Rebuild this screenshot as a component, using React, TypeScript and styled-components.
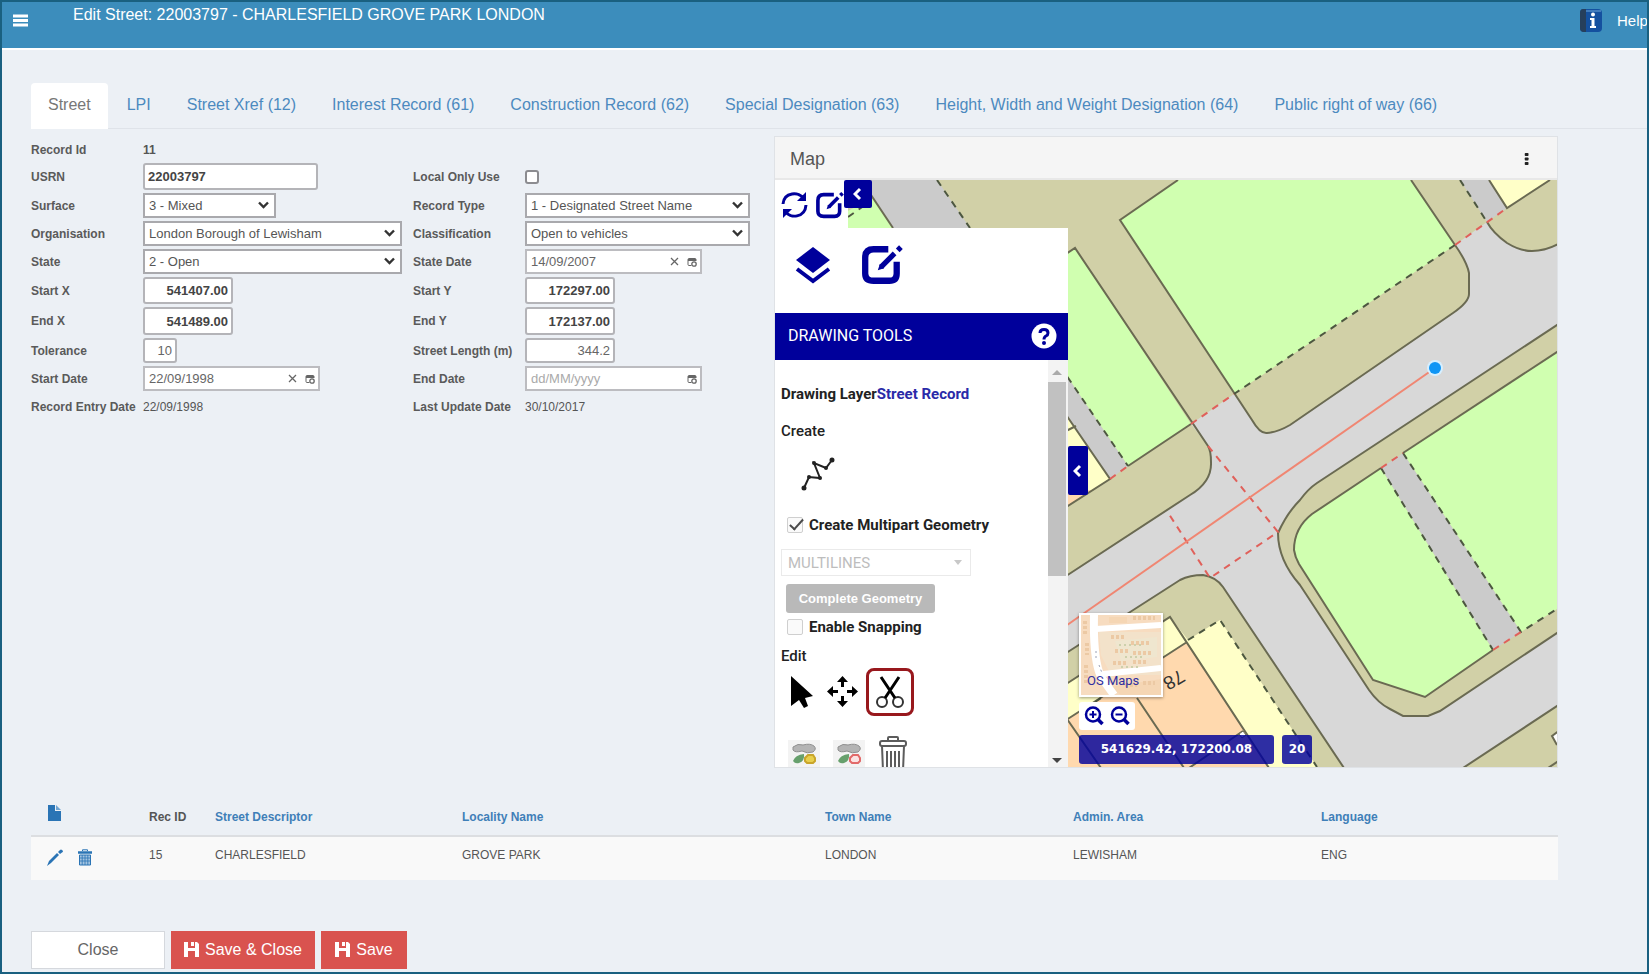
import React from "react";
import styled, { createGlobalStyle } from "styled-components";

const NAVY = "#00009b";
const LINK = "#4c8abf";

const GlobalStyle = createGlobalStyle`
  * { box-sizing: border-box; }
  body {
    margin: 0;
    background: #ecf0f5;
    font-family: "Liberation Sans", Arial, sans-serif;
    color: #555;
  }
  button, input, select { font-family: inherit; margin: 0; }
  button { cursor: pointer; }
  svg { display: block; }
`;

const Page = styled.div`
  min-height: 100vh;
  border: 2px solid #1a6080;
  display: flex;
  flex-direction: column;
`;

const Header = styled.header`
  display: flex;
  align-items: flex-start;
  height: 48px;
  background: #3c8dbc;
  border-bottom: 2px solid #fff;
  color: #fff;
  overflow: hidden;
`;

const MenuButton = styled.button`
  border: 0;
  background: none;
  padding: 12px 11px;
  width: 71px;
  color: #fff;
`;

const Title = styled.h1`
  margin: 0;
  flex: 1;
  font-size: 16px;
  line-height: 26px;
  font-weight: 400;
`;

const HelpLink = styled.a`
  display: flex;
  align-items: center;
  gap: 14px;
  width: 68px;
  padding-top: 6px;
  color: #fff;
  font-size: 15px;
  line-height: 24px;
  text-decoration: none;
  white-space: nowrap;
  svg { flex: none; }
`;

const Tabs = styled.nav`
  display: flex;
  margin: 33px 0 0 29px;
  border-bottom: 1px solid #dfe3e9;
`;

const Tab = styled.a<{ $active?: boolean }>`
  padding: 0 17px 2px;
  margin: 0 2px -1px 0;
  border-radius: 4px 4px 0 0;
  font-size: 16px;
  line-height: 44px;
  text-decoration: none;
  white-space: nowrap;
  color: ${(p) => (p.$active ? "#777" : LINK)};
  background: ${(p) => (p.$active ? "#fff" : "transparent")};
`;

const Main = styled.main`
  padding: 0 89px 3px 29px;
`;

const Columns = styled.div`
  display: flex;
  align-items: flex-start;
  padding-top: 7px;
`;

const Form = styled.form`
  flex: none;
  width: 743px;
  padding-top: 3px;
  display: grid;
  grid-template-columns: 112px 270px 112px 1fr;
  grid-template-rows: 21px 27px repeat(3, 25px) 27px 28px repeat(3, 25px);
  row-gap: 3px;
  align-items: center;
`;

const Label = styled.label`
  font-size: 12px;
  line-height: 16px;
  font-weight: 700;
  color: #5a5a5a;
  white-space: nowrap;
`;

const Value = styled.span<{ $strong?: boolean }>`
  font-size: 12px;
  line-height: 16px;
  font-weight: ${(p) => (p.$strong ? 700 : 400)};
`;

const TextBox = styled.input<{ $w: number; $strong?: boolean; $right?: boolean }>`
  width: ${(p) => p.$w}px;
  height: 100%;
  padding: 0 3px;
  border: 2px solid #b4b4b8;
  border-radius: 3px;
  background: #fff;
  color: ${(p) => (p.$strong ? "#444" : "#666")};
  font-size: 13px;
  font-weight: ${(p) => (p.$strong ? 700 : 400)};
  text-align: ${(p) => (p.$right ? "right" : "left")};
`;

const SelectWrap = styled.div<{ $w: number }>`
  position: relative;
  width: ${(p) => p.$w}px;
  height: 100%;
  svg { position: absolute; right: 7px; top: 8px; pointer-events: none; }
`;

const Select = styled.select`
  appearance: none;
  width: 100%;
  height: 100%;
  padding: 0 24px 0 4px;
  border: 2px solid #a9a9ad;
  border-radius: 0;
  background: #fff;
  color: #555;
  font-size: 13px;
`;

const DateWrap = styled.div`
  display: flex;
  align-items: center;
  gap: 8px;
  width: 177px;
  height: 100%;
  padding: 0 3px 0 4px;
  border: 2px solid #bcbcc0;
  background: #fff;
`;

const DateInput = styled.input`
  flex: 1;
  min-width: 0;
  padding: 0;
  border: 0;
  background: none;
  color: #666;
  font-size: 13px;
  &::placeholder { color: #aaa; opacity: 1; }
`;

const BareButton = styled.button`
  border: 0;
  background: none;
  padding: 0;
  color: inherit;
  display: flex;
`;

const Tick = styled.input`
  appearance: none;
  width: 14px;
  height: 14px;
  border: 2px solid #8c8c90;
  border-radius: 3px;
  background: #fff;
`;

const MapPanel = styled.section`
  flex: 1;
  min-width: 0;
  border: 1px solid #dfe2e6;
  background: #fff;
`;

const MapHead = styled.header`
  display: flex;
  align-items: center;
  justify-content: space-between;
  height: 43px;
  padding: 2px 26px 0 15px;
  background: #f5f5f5;
  border-bottom: 2px solid #e8e8e8;
`;

const MapTitle = styled.h2`
  margin: 0;
  font-size: 18px;
  line-height: 24px;
  font-weight: 400;
`;

const MapBody = styled.div`
  position: relative;
  height: 587px;
  overflow: hidden;
`;

const MapCanvas = styled.svg`
  position: absolute;
  inset: 0;
  width: 100%;
  height: 100%;
`;

const Overlay = styled.div`
  position: relative;
  width: 293px;
  height: 100%;
  display: flex;
  flex-direction: column;
`;

const QuickBar = styled.div`
  display: flex;
  height: 48px;
  align-items: flex-start;
`;

const QuickTools = styled.div`
  display: flex;
  gap: 7px;
  width: 73px;
  height: 48px;
  padding: 11px 0 0 6px;
  background: #fff;
  color: ${NAVY};
`;

const CollapseButton = styled.button`
  display: flex;
  align-items: center;
  justify-content: center;
  padding: 0;
  width: 28px;
  height: 28px;
  margin-left: -4px;
  border: 0;
  border-radius: 2px;
  background: ${NAVY};
  color: #fff;
`;

const SideHandle = styled(CollapseButton)`
  position: absolute;
  left: 293px;
  top: 266px;
  width: 20px;
  height: 49px;
  margin: 0;
`;

const ModeBar = styled.div`
  display: flex;
  gap: 30px;
  height: 85px;
  padding: 16px 20px;
  background: #fff;
  color: ${NAVY};
`;

const ToolsHead = styled.div`
  display: flex;
  align-items: center;
  justify-content: space-between;
  height: 47px;
  padding: 0 11px 2px 13px;
  background: ${NAVY};
  color: #fff;
  font: 400 16px "Roboto", sans-serif;
`;

const ToolsPane = styled.div`
  display: flex;
  flex: 1;
  min-height: 0;
  background: #fff;
  color: #222;
  overflow: hidden;
`;

const ToolsBody = styled.div`
  flex: 1;
  padding: 24px 0 0 6px;
  overflow: hidden;
`;

const Scrollbar = styled.div`
  display: flex;
  flex-direction: column;
  width: 20px;
  padding: 3px 2px 4px 0;
  background: #f3f3f3;
`;

const ScrollArrow = styled.span<{ $down?: boolean }>`
  margin: ${(p) => (p.$down ? "auto auto 0" : "7px auto")};
  border: 5px solid transparent;
  border-width: ${(p) => (p.$down ? "5px 5px 0" : "0 5px 5px")};
  border-top-color: ${(p) => (p.$down ? "#444" : "transparent")};
  border-bottom-color: ${(p) => (p.$down ? "transparent" : "#aaa")};
  height: 5px;
`;

const ScrollThumb = styled.span`
  height: 194px;
  background: #c1c1c1;
`;

const ToolLabel = styled.div<{ $strong?: boolean }>`
  font: ${(p) => (p.$strong ? 700 : 500)} 15px/20px "Roboto", sans-serif;
  white-space: nowrap;
  span { color: #2a2aa8; }
`;

const CreateLabel = styled(ToolLabel)`
  margin-top: 17px;
`;

const EditLabel = styled(ToolLabel)`
  margin-top: 9px;
`;

const CreateRow = styled.div`
  padding: 16px 0 24px 20px;
`;

const CheckLabel = styled.label`
  display: flex;
  align-items: center;
  gap: 6px;
  padding-left: 6px;
  font: 700 15px/20px "Roboto", sans-serif;
  white-space: nowrap;
`;

const SoftTick = styled.input`
  appearance: none;
  position: relative;
  width: 16px;
  height: 16px;
  border: 1px solid #cfcfcf;
  border-radius: 2px;
  background: #fafafa;
  &:checked::after {
    content: "";
    position: absolute;
    left: 5px;
    top: -2px;
    width: 5px;
    height: 12px;
    border: solid #4a4a4a;
    border-width: 0 2px 2px 0;
    transform: rotate(42deg);
  }
`;

const GeometrySelect = styled.div`
  position: relative;
  width: 190px;
  height: 27px;
  margin: 14px 0 8px;
  select {
    appearance: none;
    width: 100%;
    height: 100%;
    padding: 0 6px;
    border: 1px solid #eaeaea;
    background: #fff;
    color: #bdbdbd;
    opacity: 1;
    font: 400 15px "Roboto", sans-serif;
  }
  svg { position: absolute; right: 9px; top: 11px; }
`;

const CompleteButton = styled.button`
  display: block;
  width: 149px;
  height: 29px;
  margin: 0 0 4px 5px;
  padding: 0;
  border: 0;
  border-radius: 3px;
  background: #b9b9b9;
  color: #fff;
  font: 700 13px "Liberation Sans", sans-serif;
  white-space: nowrap;
`;

const EditRow = styled.div`
  display: flex;
  align-items: center;
  gap: 8px;
  height: 48px;
  padding-left: 7px;
  margin: 2px 0 20px;
`;

const EditTool = styled.button<{ $active?: boolean }>`
  display: flex;
  align-items: center;
  justify-content: center;
  width: ${(p) => (p.$active ? 48 : 31)}px;
  height: 48px;
  padding: 0;
  border: ${(p) => (p.$active ? "3px solid #98181d" : "0")};
  border-radius: 8px;
  background: none;
  color: #000;
`;

const BottomRow = styled.div`
  display: flex;
  align-items: flex-start;
  gap: 13px;
  padding-left: 7px;
`;

const PartTool = styled(BareButton)`
  margin-top: 4px;
  padding: 3px 2px;
  background: #f3f3f3;
`;

const MapControls = styled.div`
  position: absolute;
  left: 304px;
  bottom: 3px;
  display: flex;
  flex-direction: column;
  align-items: flex-start;
  gap: 5px;
`;

const Basemap = styled.button`
  position: relative;
  width: 84px;
  height: 84px;
  padding: 0;
  border: 2px solid #fff;
  background: #f8d9b8;
  box-shadow: 0 1px 3px rgba(0, 0, 0, 0.4);
  overflow: hidden;
  span {
    position: absolute;
    left: 6px;
    bottom: 6px;
    color: #2f2fa0;
    font: 400 13px/16px "Roboto", sans-serif;
  }
`;

const ZoomBox = styled.div`
  display: flex;
  gap: 6px;
  height: 28px;
  padding: 4px 5px;
  border-radius: 3px;
  background: #fff;
  color: ${NAVY};
`;

const Readouts = styled.div`
  display: flex;
  gap: 8px;
`;

const Readout = styled.output<{ $w: number }>`
  width: ${(p) => p.$w}px;
  border-radius: 3px;
  background: rgba(0, 0, 155, 0.82);
  color: #fff;
  font: 700 12px/29px "DejaVu Sans", sans-serif;
  text-align: center;
`;

const Table = styled.table`
  width: 100%;
  margin-top: 30px;
  border-collapse: collapse;
  table-layout: fixed;
  font-size: 12px;
  line-height: 18px;
`;

const Th = styled.th`
  height: 38px;
  padding: 8px 0;
  border-bottom: 2px solid #dcdee1;
  text-align: left;
  vertical-align: middle;
  color: #555;
  a { color: #3f7fb8; text-decoration: none; }
`;

const Td = styled.td`
  height: 44px;
  padding: 9px 0;
  background: #f9f9f9;
  vertical-align: top;
`;

const NewRecord = styled(BareButton)`
  margin: -7px 0 0 17px;
`;

const RowIcons = styled.div`
  display: flex;
  gap: 15px;
  padding: 3px 0 0 16px;
  color: #2a74b5;
`;

const Actions = styled.div`
  display: flex;
  gap: 6px;
  margin-top: 51px;
`;

const ActionButton = styled.button<{ $w: number; $primary?: boolean }>`
  display: flex;
  align-items: center;
  justify-content: center;
  gap: 6px;
  width: ${(p) => p.$w}px;
  height: 38px;
  padding: 0;
  border: 1px solid ${(p) => (p.$primary ? "#d9534f" : "#d5d8dd")};
  background: ${(p) => (p.$primary ? "#d9534f" : "#fff")};
  color: ${(p) => (p.$primary ? "#fff" : "#666")};
  font-size: 16px;
  white-space: nowrap;
`;

const Chevron = () => (
  <svg width="11" height="8" viewBox="0 0 11 8">
    <path d="M1 1.5 5.5 6 10 1.5" fill="none" stroke="#333" strokeWidth="2.4" />
  </svg>
);

const CalendarIcon = () => (
  <svg width="10" height="10" viewBox="0 0 10 10" fill="none" stroke="#666">
    <path d="M9 4V2.5Q9 1.500 8 1.500H2Q1 1.500 1 2.500V7.500Q1 8.500 2 8.500H4.500" />
    <path d="M1 3H9" strokeWidth="2" />
    <circle cx="7" cy="7" r="2.200" strokeWidth="1.300" />
  </svg>
);

const LeftChevron = () => (
  <svg width="10" height="14" viewBox="0 0 10 14">
    <path d="M7 2 2 7 7 12" fill="none" stroke="#fff" strokeWidth="3" />
  </svg>
);

const EditIcon = ({ size, weight }: { size: number; weight: number }) => (
  <svg width={size} height={size} viewBox="0 0 40 40" fill="none" stroke="currentColor" strokeWidth={weight}>
    <path d="M26 5H12Q4 5 4 13V28Q4 35 12 35H27Q34 35 34 28V17" />
    <path d="M19 22 32 9" strokeWidth="5" />
    <path d="M18 19 16 25 22 23Z" fill="currentColor" stroke="none" />
    <path d="M35 6 38 3" strokeWidth="5" />
  </svg>
);

const SyncIcon = () => (
  <svg width="27" height="28" viewBox="0 0 27 28" fill="none" stroke="currentColor" strokeWidth="3">
    <path d="M2 13C3 1 18 0 23 8" />
    <path d="M25 14C24 27 9 28 4 20" />
    <path d="M25 1V10H16Z" fill="currentColor" stroke="none" />
    <path d="M2 27V18H11Z" fill="currentColor" stroke="none" />
  </svg>
);

const SaveIcon = () => (
  <svg width="15" height="17" viewBox="0 0 15 17" fill="#fff">
    <path fillRule="evenodd" d="M0 0H4V6H11V0H13L15 2V15H11V9H4V15H0ZM7 0H10V4H7Z" />
  </svg>
);

const TrashIcon = () => (
  <svg width="14" height="17" viewBox="0 0 14 17" fill="none" stroke="currentColor">
    <path d="M4.500 2V.8H9.500V2" />
    <path d="M0 3.500H14" strokeWidth="2.500" />
    <path d="M1.500 6H12.500V16H1.500Z" fill="#a4c4e0" />
    <path d="M4.200 6V16M7 6V16M9.800 6V16M2 9H12M2 12H12" strokeWidth=".8" />
  </svg>
);

const PartsIcon = ({ remove }: { remove?: boolean }) => (
  <svg width="28" height="22" viewBox="0 0 28 22">
    <path d="M3 4Q8 0 13 2Q20 0 24 3Q27 6 23 9Q17 11 12 8Q5 10 3 7Z" fill="#b4b4b4" stroke="#909090" />
    <path d="M3 18Q5 12 14 11Q15 18 9 20Q5 21 3 18Z" fill="#67a06c" />
    <path
      d="M18 12H23L25 15V18L23 20H17L15 18V15Z"
      fill={remove ? "#fbe3e3" : "#e8cf4c"}
      stroke={remove ? "#e26a6a" : "#c9a52a"}
      strokeWidth="2"
    />
  </svg>
);

const BinIcon = () => (
  <svg width="30" height="36" viewBox="0 0 30 36" fill="none" stroke="#5c5c5c" strokeWidth="2">
    <path d="M10 5V2Q10 1 11 1H19Q20 1 20 2V5" />
    <rect x="2" y="5" width="26" height="5" rx="2" />
    <path d="M4 10 5 35H25L26 10" />
    <path d="M9 15V36M13 15V36M17 15V36M21 15V36" />
  </svg>
);

const edge = { fill: "none", stroke: "#6a6a52", strokeWidth: 2 };
const dashed = { fill: "none", stroke: "#4d5740", strokeWidth: 2, strokeDasharray: "7 6" };
const redDash = { fill: "none", stroke: "#e0605a", strokeWidth: 2, strokeDasharray: "7 6" };

const StreetMap = () => (
  <MapCanvas viewBox="775 180 782 587" preserveAspectRatio="xMinYMin slice">
    <rect x="775" y="180" width="1200" height="900" fill="#d1d0a7" />
    {/* carriageway */}
    <path
      fill="#d8d8d8"
      d="M1191 424 1234 394 1252 420Q1260 434 1267 433 1278 432 1290 425L1453 313Q1469 302 1469 294V273Q1467 262 1455 245L1487 222Q1493 233 1507 243 1520 251 1532 251 1546 251 1557 244V767H1343L1223 587Q1216 577 1203 575 1190 575 1180 580L1067 653V575L1190 495Q1212 482 1211 462 1211 451 1208 446Z"
    />
    {/* upper left footpath */}
    <path fill="#cbcbcb" d="M861 180H937L970 228H893Z" />
    <path fill="#d0ffb0" d="M840 215 873 198 893 228H840Z" />
    <path {...edge} d="M861 180 893 228" />
    <path {...dashed} d="M937 180 970 228M848 217 868 203" />
    {/* parcels */}
    <path fill="#d0ffb0" d="M1178 180 1120 220 1234 394 1455 245 1411 180Z" />
    <path {...edge} d="M1178 180 1120 220 1252 420Q1260 434 1267 433 1278 432 1290 425L1453 313Q1469 302 1469 294V273Q1467 262 1455 245L1411 180" />
    <path {...dashed} d="M1455 245 1234 394" />
    <path fill="#d0ffb0" d="M1060 258 1075 248 1191 424 1128 466 1060 366Z" />
    <path fill="#cbcbcb" d="M1060 366 1128 466 1110 479 1060 406Z" />
    <path fill="#ffffc8" d="M1060 406 1110 479 1060 511Z" />
    <path fill="#ffd9ae" d="M1060 490 1092 490 1060 511Z" />
    <path {...edge} d="M1060 258 1075 248 1208 446Q1211 451 1211 462 1212 482 1190 495L1060 580" />
    <path {...edge} d="M1060 406 1110 479 1060 511M1128 466 1191 424M1060 434 1076 426" />
    <path {...dashed} d="M1060 366 1128 466" />
    {/* north east corner */}
    <path fill="#cbcbcb" d="M1460 180H1489L1507 208 1487 222Z" />
    <path fill="#ffffc8" d="M1489 180 1507 208 1550 180Z" />
    <path {...edge} d="M1489 180 1507 208 1550 180M1487 222Q1493 233 1507 243 1520 251 1532 251 1546 251 1560 243" />
    <path {...dashed} d="M1460 180 1487 222" />
    {/* central island */}
    <path
      fill="#d1d0a7"
      stroke="#6a6a52"
      strokeWidth="2"
      d="M1560 323 1317 483Q1308 489 1300 500 1287 513 1278 533 1278 560 1300 585L1369 690Q1378 703 1390 709L1403 716H1428L1440 711 1560 631"
    />
    <path
      fill="#d0ffb0"
      stroke="#6a6a52"
      strokeWidth="2"
      d="M1381 468 1312 514Q1294 528 1294 550 1295 557 1299 564L1373 680 1425 697 1493 650"
    />
    <path fill="#d0ffb0" d="M1403 453 1557 352V609L1521 632Z" />
    <path fill="#cbcbcb" d="M1381 468 1403 453 1521 632 1493 650Z" />
    <path {...edge} d="M1403 453 1560 350" />
    <path {...dashed} d="M1381 468 1493 650M1403 453 1521 632 1560 607" />
    {/* south east corner */}
    <path fill="#d1d0a7" stroke="#6a6a52" strokeWidth="2" d="M1560 704 1463 768H1560" />
    <path fill="#fff" stroke="#6a6a52" strokeWidth="2" d="M1560 730 1552 736 1557 745M1548 768 1560 760" />
    {/* south west buildings */}
    <path {...edge} d="M1060 657 1180 580Q1190 575 1203 575 1216 577 1223 587L1344 768" />
    <path fill="#ffffc8" d="M1060 688 1170 617 1188 640 1220 620 1317 767H1060Z" />
    <path fill="#ffd9ae" d="M1060 724 1187 642 1268 767H1060Z" />
    <path {...edge} d="M1060 688 1170 617 1269 768M1060 724 1187 642M1137 698 1184 768M1067 719 1101 768M1243 731 1189 768" />
    <path fill="#fff" stroke="#6a6a52" d="M1243 731 1239 734 1242 738 1246 735Z" />
    <path {...dashed} d="M1188 640 1220 620 1317 767M1095 702 1110 692" />
    <text
      x="1174"
      y="680"
      fontSize="19"
      fill="#333"
      textAnchor="middle"
      dominantBaseline="central"
      transform="rotate(150 1174 680)"
    >
      78
    </text>
    {/* street record limits and centre line */}
    <path {...redDash} d="M1191 424 1234 394M1110 479 1128 466M1455 245 1507 208M1381 468 1403 453M1493 650 1521 632" />
    <path {...redDash} d="M1208 446 1278 532 1210 578 1167 511" />
    <path d="M1060 630 1435 368" fill="none" stroke="#f08672" strokeWidth="2" />
    <circle cx="1435" cy="368" r="8" fill="#d6efff" />
    <circle cx="1435" cy="368" r="6" fill="#0f95f5" />
  </MapCanvas>
);

const Thumb = () => (
  <svg width="80" height="80" viewBox="0 0 80 80">
    <rect width="80" height="80" fill="#f7dcc0" />
    <path d="M18 17H80V60H30L20 40Z" fill="#f3e2ca" />
    <path d="M34 26 76 22V42L40 46Z" fill="#efe6cf" />
    <path d="M28 2H46V8H28ZM28 72 80 64V80H40Z" fill="#f5d6b4" />
    <path d="M13 0Q12 45 20 62L33 80" fill="none" stroke="#fff" strokeWidth="8" />
    <path d="M15 14 80 10M22 59 80 53" stroke="#fff" strokeWidth="6" />
    <path
      d="M4 6V20M6 28V40M5 50V70M30 22H44M50 28H70M34 36H48M52 38H72M32 48H46M52 47H66M44 70H56M62 68H74M52 3H74"
      stroke="#ecc9a4"
      strokeWidth="4"
      strokeDasharray="3 2"
    />
    <path d="M38 30H60M44 42H62M40 52H60" stroke="#cdd0ac" strokeWidth="2" strokeDasharray="2 3" />
    <path d="M15 36V46M18 50 21 58" stroke="#9aa0b4" strokeDasharray="2 3" />
  </svg>
);

const Magnifier = ({ plus }: { plus?: boolean }) => (
  <svg width="20" height="20" viewBox="0 0 20 20" fill="none" stroke="currentColor" strokeWidth="2.500">
    <circle cx="9" cy="8.500" r="7" />
    <path d="M14 13.500 18.500 18" strokeWidth="3.500" />
    <path d={plus ? "M5.500 8.500H12.500M9 5V12" : "M5.500 8.500H12.500"} strokeWidth="2" />
  </svg>
);

const SelectField = ({ id, w, value }: { id: string; w: number; value: string }) => (
  <SelectWrap $w={w}>
    <Select id={id} defaultValue={value}>
      <option>{value}</option>
    </Select>
    <Chevron />
  </SelectWrap>
);

const DateField = ({ id, value }: { id: string; value?: string }) => (
  <DateWrap>
    <DateInput id={id} defaultValue={value} placeholder="dd/MM/yyyy" />
    {value && (
      <BareButton type="button" aria-label="Clear date">
        <svg width="9" height="9" viewBox="0 0 9 9">
          <path d="M1 1 8 8M8 1 1 8" stroke="#666" strokeWidth="1.300" />
        </svg>
      </BareButton>
    )}
    <BareButton type="button" aria-label="Open calendar">
      <CalendarIcon />
    </BareButton>
  </DateWrap>
);

const tabs = [
  "Street",
  "LPI",
  "Street Xref (12)",
  "Interest Record (61)",
  "Construction Record (62)",
  "Special Designation (63)",
  "Height, Width and Weight Designation (64)",
  "Public right of way (66)",
];

const columns = ["Street Descriptor", "Locality Name", "Town Name", "Admin. Area", "Language"];
const record = ["CHARLESFIELD", "GROVE PARK", "LONDON", "LEWISHAM", "ENG"];

export default function App() {
  return (
    <>
      <GlobalStyle />
      <Page>
        <Header>
          <MenuButton aria-label="Toggle menu">
            <svg width="15" height="13" viewBox="0 0 15 13">
              <path d="M0 2H15M0 6.500H15M0 11H15" stroke="#fff" strokeWidth="3" />
            </svg>
          </MenuButton>
          <Title>Edit Street: 22003797 - CHARLESFIELD GROVE PARK LONDON</Title>
          <HelpLink href="#help">
            <svg width="24" height="25" viewBox="0 0 24 25">
              <rect x="1" y="1" width="22" height="23" rx="4" fill="#14509f" />
              <path d="M5 1H4Q1 1 1 5V20Q1 24 5 24H7V1Z" fill="#263f5c" />
              <path d="M7 3H22" stroke="#6fa8dc" />
              <circle cx="14" cy="6.500" r="2" fill="#fff" />
              <path d="M11 10H15.500V18H17V20H11V18H12.500V12H11Z" fill="#fff" />
            </svg>
            Help
          </HelpLink>
        </Header>
        <Tabs>
          {tabs.map((t, i) => (
            <Tab key={t} href="#tab" $active={i === 0}>
              {t}
            </Tab>
          ))}
        </Tabs>
        <Main>
          <Columns>
            <Form>
              <Label as="span">Record Id</Label>
              <Value $strong>11</Value>
              <span />
              <span />
              <Label htmlFor="usrn">USRN</Label>
              <TextBox id="usrn" $w={175} $strong defaultValue="22003797" />
              <Label htmlFor="local">Local Only Use</Label>
              <Tick id="local" type="checkbox" />
              <Label htmlFor="surface">Surface</Label>
              <SelectField id="surface" w={133} value="3 - Mixed" />
              <Label htmlFor="rtype">Record Type</Label>
              <SelectField id="rtype" w={225} value="1 - Designated Street Name" />
              <Label htmlFor="org">Organisation</Label>
              <SelectField id="org" w={259} value="London Borough of Lewisham" />
              <Label htmlFor="class">Classification</Label>
              <SelectField id="class" w={225} value="Open to vehicles" />
              <Label htmlFor="state">State</Label>
              <SelectField id="state" w={259} value="2 - Open" />
              <Label htmlFor="sdate">State Date</Label>
              <DateField id="sdate" value="14/09/2007" />
              <Label htmlFor="sx">Start X</Label>
              <TextBox id="sx" $w={90} $strong $right defaultValue="541407.00" />
              <Label htmlFor="sy">Start Y</Label>
              <TextBox id="sy" $w={90} $strong $right defaultValue="172297.00" />
              <Label htmlFor="ex">End X</Label>
              <TextBox id="ex" $w={90} $strong $right defaultValue="541489.00" />
              <Label htmlFor="ey">End Y</Label>
              <TextBox id="ey" $w={90} $strong $right defaultValue="172137.00" />
              <Label htmlFor="tol">Tolerance</Label>
              <TextBox id="tol" $w={34} $right defaultValue="10" />
              <Label htmlFor="len">Street Length (m)</Label>
              <TextBox id="len" $w={90} $right defaultValue="344.2" />
              <Label htmlFor="start">Start Date</Label>
              <DateField id="start" value="22/09/1998" />
              <Label htmlFor="end">End Date</Label>
              <DateField id="end" />
              <Label as="span">Record Entry Date</Label>
              <Value>22/09/1998</Value>
              <Label as="span">Last Update Date</Label>
              <Value>30/10/2017</Value>
            </Form>
            <MapPanel>
              <MapHead>
                <MapTitle>Map</MapTitle>
                <BareButton aria-label="Map menu">
                  <svg width="8" height="12" viewBox="0 0 8 16" fill="#222">
                    <rect x="1" y="0" width="5" height="4" rx="1" />
                    <rect x="1" y="6" width="5" height="4" rx="1" />
                    <rect x="1" y="12" width="5" height="4" rx="1" />
                  </svg>
                </BareButton>
              </MapHead>
              <MapBody>
                <StreetMap />
                <Overlay>
                  <QuickBar>
                    <QuickTools>
                      <BareButton aria-label="Refresh map">
                        <SyncIcon />
                      </BareButton>
                      <BareButton aria-label="Edit map">
                        <EditIcon size={29} weight={5} />
                      </BareButton>
                    </QuickTools>
                    <CollapseButton aria-label="Collapse toolbar">
                      <LeftChevron />
                    </CollapseButton>
                  </QuickBar>
                  <ModeBar>
                    <BareButton aria-label="Layers">
                      <svg width="36" height="40" viewBox="0 0 36 40">
                        <path d="M18 3 35 16 18 29 1 16Z" fill="currentColor" />
                        <path d="M2 25 18 37 34 25" fill="none" stroke="currentColor" strokeWidth="4" />
                      </svg>
                    </BareButton>
                    <BareButton aria-label="Drawing">
                      <EditIcon size={42} weight={6} />
                    </BareButton>
                  </ModeBar>
                  <ToolsHead>
                    DRAWING TOOLS
                    <BareButton aria-label="Drawing help">
                      <svg width="26" height="26" viewBox="0 0 26 26">
                        <circle cx="13" cy="13" r="12.500" fill="#fff" />
                        <path
                          d="M9 10Q9 6.500 13 6.500 17 6.500 17 10 17 12 15 13 13 14 13 16.500"
                          fill="none"
                          stroke={NAVY}
                          strokeWidth="3"
                        />
                        <circle cx="13" cy="20" r="2" fill={NAVY} />
                      </svg>
                    </BareButton>
                  </ToolsHead>
                  <ToolsPane>
                    <ToolsBody>
                      <ToolLabel $strong>
                        Drawing Layer<span>Street Record</span>
                      </ToolLabel>
                      <CreateLabel>Create</CreateLabel>
                      <CreateRow>
                        <BareButton aria-label="Create line">
                          <svg width="34" height="34" viewBox="0 0 34 34" stroke="#222" strokeWidth="2" fill="#222">
                            <path d="M3 31 8 20 19 21 13 6 25 11 31 3" fill="none" />
                            <circle cx="3" cy="31" r="1.500" />
                            <circle cx="8" cy="20" r="1" />
                            <circle cx="19" cy="21" r="1" />
                            <circle cx="13" cy="6" r="1" />
                            <circle cx="25" cy="11" r="1" />
                            <circle cx="31" cy="3" r="1.500" />
                          </svg>
                        </BareButton>
                      </CreateRow>
                      <CheckLabel>
                        <SoftTick type="checkbox" defaultChecked />
                        Create Multipart Geometry
                      </CheckLabel>
                      <GeometrySelect>
                        <select disabled aria-label="Geometry type">
                          <option>MULTILINES</option>
                        </select>
                        <svg width="8" height="5" viewBox="0 0 8 5">
                          <path d="M0 0H8L4 5Z" fill="#c8c8c8" />
                        </svg>
                      </GeometrySelect>
                      <CompleteButton>Complete Geometry</CompleteButton>
                      <CheckLabel>
                        <SoftTick type="checkbox" />
                        Enable Snapping
                      </CheckLabel>
                      <EditLabel>Edit</EditLabel>
                      <EditRow>
                        <EditTool aria-label="Select">
                          <svg width="27" height="34" viewBox="0 0 27 34">
                            <path d="M1 1V31L9 25 14 33 18 31 15 23 23 21Z" fill="#000" />
                          </svg>
                        </EditTool>
                        <EditTool aria-label="Move">
                          <svg width="31" height="32" viewBox="0 0 31 32">
                            <path d="M15.500 0 21 6H17V11H14V6H10ZM15.500 31 21 25H17V20H14V25H10ZM0 15.500 6 10V14H11V17H6V21ZM31 15.500 25 10V14H20V17H25V21Z" />
                          </svg>
                        </EditTool>
                        <EditTool aria-label="Split" $active>
                          <svg width="30" height="34" viewBox="0 0 30 34" fill="none" stroke="#000" strokeWidth="2">
                            <circle cx="7" cy="27" r="5" stroke="#333" />
                            <circle cx="23" cy="27" r="5" stroke="#333" />
                            <path d="M6 2 20 23M24 2 10 23" strokeWidth="3" />
                          </svg>
                        </EditTool>
                      </EditRow>
                      <BottomRow>
                        <PartTool aria-label="Add part">
                          <PartsIcon />
                        </PartTool>
                        <PartTool aria-label="Remove part">
                          <PartsIcon remove />
                        </PartTool>
                        <BareButton aria-label="Delete">
                          <BinIcon />
                        </BareButton>
                      </BottomRow>
                    </ToolsBody>
                    <Scrollbar>
                      <ScrollArrow />
                      <ScrollThumb />
                      <ScrollArrow $down />
                    </Scrollbar>
                  </ToolsPane>
                </Overlay>
                <SideHandle aria-label="Collapse panel">
                  <LeftChevron />
                </SideHandle>
                <MapControls>
                  <Basemap>
                    <Thumb />
                    <span>OS Maps</span>
                  </Basemap>
                  <ZoomBox>
                    <BareButton aria-label="Zoom in">
                      <Magnifier plus />
                    </BareButton>
                    <BareButton aria-label="Zoom out">
                      <Magnifier />
                    </BareButton>
                  </ZoomBox>
                  <Readouts>
                    <Readout $w={195}>541629.42, 172200.08</Readout>
                    <Readout $w={30}>20</Readout>
                  </Readouts>
                </MapControls>
              </MapBody>
            </MapPanel>
          </Columns>
          <Table>
            <colgroup>
              <col width="118" />
              <col width="66" />
              <col width="247" />
              <col width="363" />
              <col width="248" />
              <col width="248" />
              <col />
            </colgroup>
            <thead>
              <tr>
                <Th>
                  <NewRecord aria-label="New record">
                    <svg width="13" height="16" viewBox="0 0 13 16">
                      <path d="M0 0H7V6H13V16H0Z" fill="#2a74b5" />
                      <path d="M8 0 13 5H8Z" fill="#6fa4d2" />
                    </svg>
                  </NewRecord>
                </Th>
                <Th>Rec ID</Th>
                {columns.map((c) => (
                  <Th key={c}>
                    <a href="#sort">{c}</a>
                  </Th>
                ))}
              </tr>
            </thead>
            <tbody>
              <tr>
                <Td>
                  <RowIcons>
                    <BareButton aria-label="Edit record">
                      <svg width="16" height="17" viewBox="0 0 16 17" fill="currentColor">
                        <path d="M0 17 2 12 10 4 12 6 4 14ZM11 3 13 1Q14 0 15 1L16 2Q16 3 15 3.500L13 5Z" />
                      </svg>
                    </BareButton>
                    <BareButton aria-label="Delete record">
                      <TrashIcon />
                    </BareButton>
                  </RowIcons>
                </Td>
                <Td>15</Td>
                {record.map((r) => (
                  <Td key={r}>{r}</Td>
                ))}
              </tr>
            </tbody>
          </Table>
          <Actions>
            <ActionButton $w={134}>Close</ActionButton>
            <ActionButton $w={144} $primary>
              <SaveIcon />
              Save &amp; Close
            </ActionButton>
            <ActionButton $w={86} $primary>
              <SaveIcon />
              Save
            </ActionButton>
          </Actions>
        </Main>
      </Page>
    </>
  );
}
